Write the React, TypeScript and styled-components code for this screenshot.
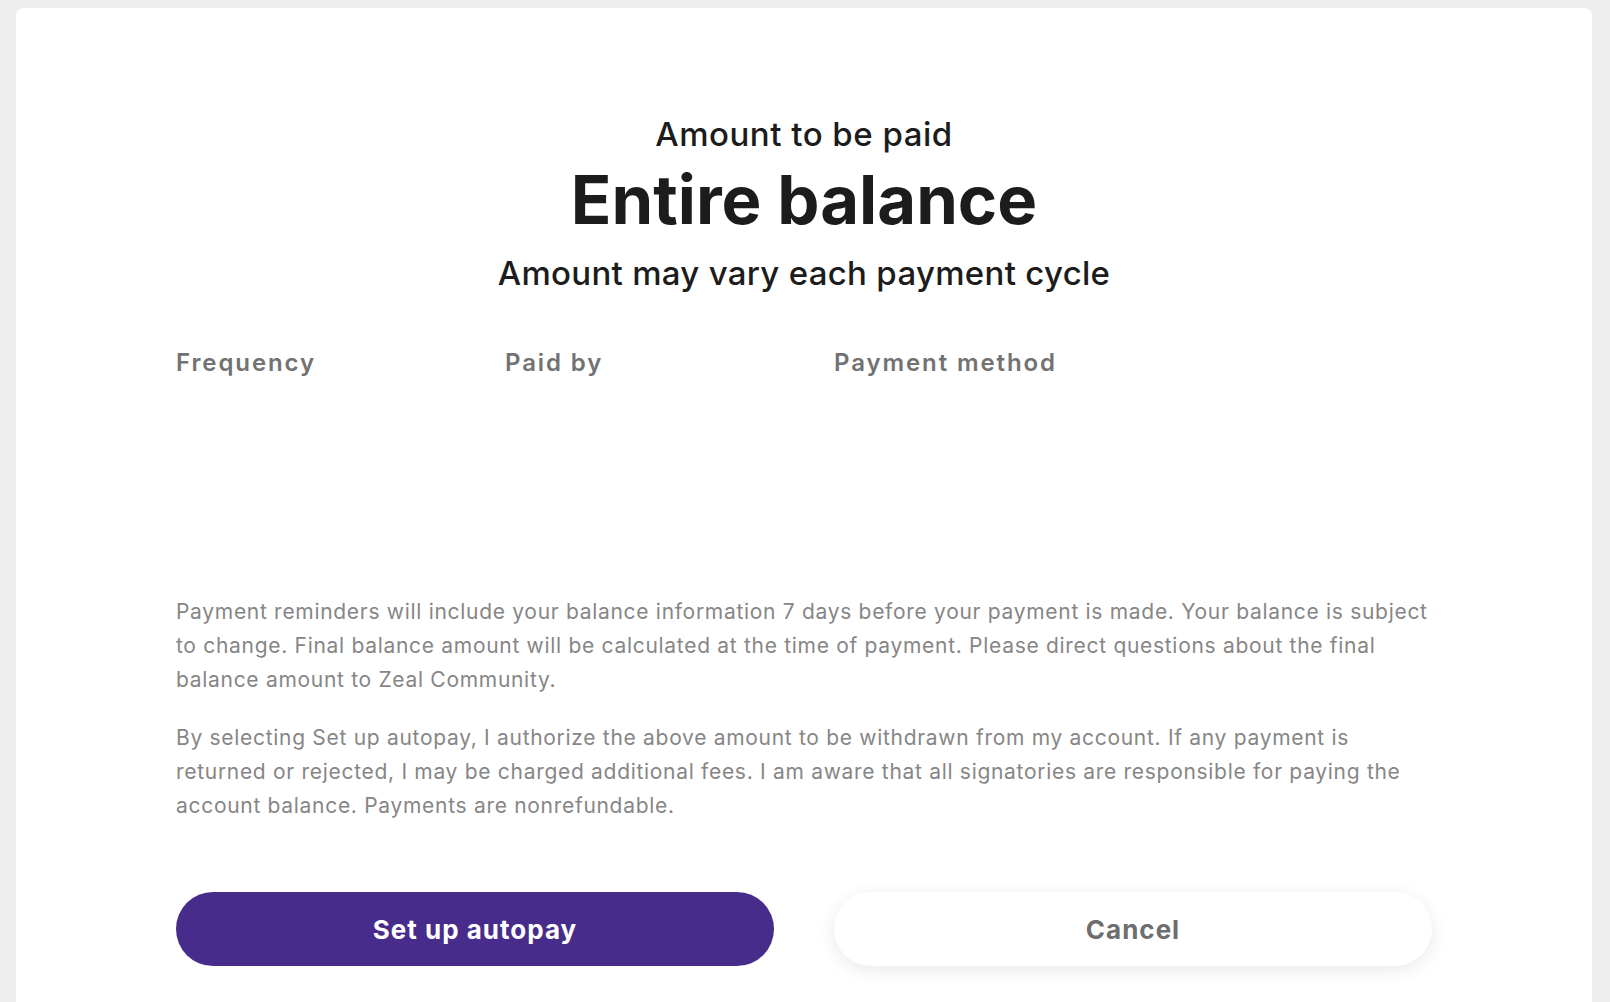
import React from 'react';
import styled, { createGlobalStyle } from 'styled-components';

const GlobalStyle = createGlobalStyle`
  html, body {
    margin: 0;
    padding: 0;
    background: #eeeeee;
    font-family: 'Inter', 'Liberation Sans', sans-serif;
    -webkit-font-smoothing: antialiased;
  }
`;

const Page = styled.div`
  padding: 8px 18px 0 16px;
  min-height: 1002px;
  box-sizing: border-box;
`;

const Card = styled.div`
  background: #ffffff;
  border-radius: 8px 8px 0 0;
  padding: 106px 160px 40px;
  min-height: 1100px;
  box-sizing: border-box;
`;

const Summary = styled.div`
  display: flex;
  flex-direction: column;
  align-items: center;
  color: #1c1c1c;
`;

const Eyebrow = styled.div`
  font-size: 33px;
  font-weight: 500;
  letter-spacing: 0.5px;
  line-height: 40px;
`;

const Amount = styled.div`
  font-size: 67px;
  font-weight: 700;
  line-height: 80px;
  margin-top: 6px;
`;

const Note = styled.div`
  font-size: 33px;
  font-weight: 500;
  letter-spacing: 0.3px;
  line-height: 40px;
  margin-top: 13px;
`;

const Details = styled.dl`
  display: grid;
  grid-template-columns: repeat(4, 1fr);
  column-gap: 60px;
  margin: 54px 0 0;
  height: 248px;
`;

const Detail = styled.div`
  display: flex;
  flex-direction: column;
  gap: 12px;
`;

const Label = styled.dt`
  font-size: 24px;
  font-weight: 600;
  letter-spacing: 1.9px;
  color: #727272;
  line-height: 32px;
`;

const Value = styled.dd`
  margin: 0;
  font-size: 22px;
  color: #1c1c1c;
`;

const Fine = styled.p`
  margin: 0 0 24px;
  font-size: 21px;
  letter-spacing: 0.7px;
  line-height: 34px;
  color: #868686;
`;

const Actions = styled.div`
  display: grid;
  grid-template-columns: 1fr 1fr;
  column-gap: 60px;
  margin-top: 69px;
`;

const Button = styled.button<{ $primary?: boolean }>`
  height: 74px;
  border: none;
  border-radius: 37px;
  font-family: inherit;
  font-size: 26px;
  font-weight: 700;
  letter-spacing: 1px;
  cursor: pointer;
  background: ${(p) => (p.$primary ? '#472c8c' : '#ffffff')};
  color: ${(p) => (p.$primary ? '#ffffff' : '#6e6e6e')};
  box-shadow: ${(p) => (p.$primary ? 'none' : '0 4px 18px rgba(0, 0, 0, 0.09)')};
`;

const details = [
  { label: 'Frequency', value: '' },
  { label: 'Paid by', value: '' },
  { label: 'Payment method', value: '' },
];

export default function App() {
  return (
    <>
      <GlobalStyle />
      <Page>
        <Card>
          <Summary>
            <Eyebrow>Amount to be paid</Eyebrow>
            <Amount>Entire balance</Amount>
            <Note>Amount may vary each payment cycle</Note>
          </Summary>
          <Details>
            {details.map((d) => (
              <Detail key={d.label}>
                <Label>{d.label}</Label>
                <Value>{d.value}</Value>
              </Detail>
            ))}
          </Details>
          <Fine>
            Payment reminders will include your balance information 7 days before your payment is made. Your balance is subject to change. Final balance amount will be calculated at the time of payment. Please direct questions about the final balance amount to Zeal Community.
          </Fine>
          <Fine>
            By selecting Set up autopay, I authorize the above amount to be withdrawn from my account. If any payment is returned or rejected, I may be charged additional fees. I am aware that all signatories are responsible for paying the account balance. Payments are nonrefundable.
          </Fine>
          <Actions>
            <Button $primary>Set up autopay</Button>
            <Button>Cancel</Button>
          </Actions>
        </Card>
      </Page>
    </>
  );
}
